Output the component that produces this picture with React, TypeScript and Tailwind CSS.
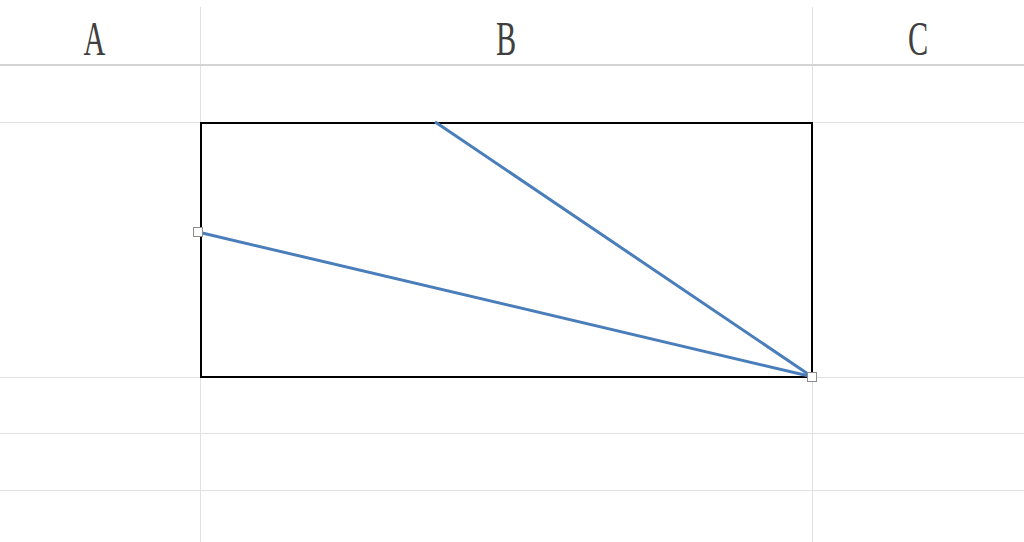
import React from 'react';

const serif = { fontFamily: '"Liberation Serif", "DejaVu Serif", serif' };

const Divider = ({ header = false }: { header?: boolean }) => (
  <div className={`w-px bg-[#e1e1e1] ${header ? 'mt-[7px]' : ''}`} />
);

const HeaderCell = ({ label, className }: { label: string; className: string }) => (
  <div className={`flex justify-center pt-[15px] ${className}`}>
    <span
      className="inline-block text-[48px] leading-none text-[#404040] scale-x-[0.63]"
      style={serif}
    >
      {label}
    </span>
  </div>
);

const Row = ({ height }: { height: string }) => (
  <div className={`flex border-b border-[#e1e1e1] ${height}`}>
    <div className="w-[200px]" />
    <Divider />
    <div className="w-[611px]" />
    <Divider />
    <div className="flex-1" />
  </div>
);

export default function App() {
  return (
    <div className="relative w-[1024px] h-[542px] overflow-hidden bg-white flex flex-col">
      {/* column headers */}
      <div className="flex h-[66px] border-b-2 border-[#d4d4d4]">
        <HeaderCell label="A" className="w-[200px] pr-[12px]" />
        <Divider header />
        <HeaderCell label="B" className="w-[611px]" />
        <Divider header />
        <HeaderCell label="C" className="flex-1" />
      </div>

      <Row height="h-[57px]" />

      {/* bordered cell with the diagonal lines */}
      <div className="flex h-[255px] border-b border-[#e1e1e1]">
        <div className="w-[200px]" />
        <div className="w-[613px] h-[256px] -mt-px border-2 border-black" />
        <div className="flex-1" />
      </div>

      <Row height="h-[56px]" />
      <Row height="h-[57px]" />
      <div className="flex flex-1">
        <div className="w-[200px]" />
        <Divider />
        <div className="w-[611px]" />
        <Divider />
        <div className="flex-1" />
      </div>

      {/* drawn shapes */}
      <svg
        className="absolute inset-0 pointer-events-none"
        width="1024"
        height="542"
        viewBox="0 0 1024 542"
      >
        <line x1="436" y1="122.5" x2="811" y2="376" stroke="#4a7ebb" strokeWidth="3" strokeLinecap="round" />
        <line x1="198" y1="232" x2="811" y2="376.5" stroke="#4a7ebb" strokeWidth="3" strokeLinecap="round" />
        <rect x="193.5" y="227.5" width="9" height="9" fill="#fff" stroke="#8c8c8c" strokeWidth="1" />
        <rect x="807.5" y="372.5" width="9" height="9" fill="#fff" stroke="#8c8c8c" strokeWidth="1" />
      </svg>
    </div>
  );
}
